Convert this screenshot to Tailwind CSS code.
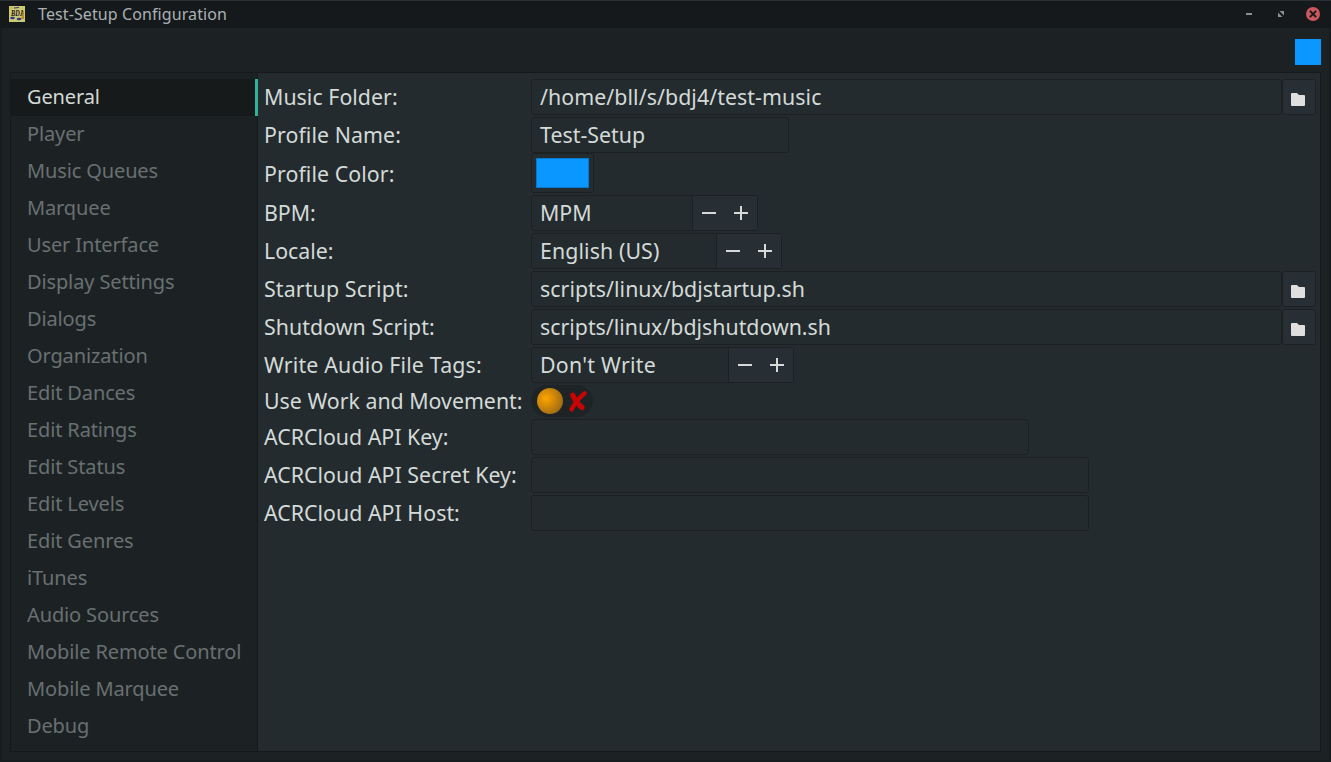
<!DOCTYPE html>
<html lang="en">
<head>
<meta charset="utf-8">
<title>Test-Setup Configuration</title>
<script src="https://cdn.jsdelivr.net/npm/@tailwindcss/browser@4"></script>
</head>
<body class="w-[1331px] h-[762px] overflow-hidden bg-[#1c2224] font-['Noto_Sans',sans-serif]">
<svg class="hidden">
  <symbol id="folder" viewBox="0 0 14 13"><path fill="#dfdfdf" d="M1 0h5l2 2h5q1 0 1 1v9q0 1-1 1H1q-1 0-1-1V1q0-1 1-1z"/></symbol>
  <symbol id="minus" viewBox="0 0 14 14"><path fill="#d3dad8" d="M0 6h14v2H0z"/></symbol>
  <symbol id="plus" viewBox="0 0 14 14"><path fill="#d3dad8" d="M0 6h6V0h2v6h6v2H8v6H6V8H0z"/></symbol>
</svg>
<div class="flex h-full flex-col border-x-2 border-b-2 border-[#171c1e]">
  <header class="-mx-[2px] flex h-7 shrink-0 items-center border-t border-[#2a3033] bg-[#15191b] pb-px pl-[9px] pr-[11px]">
    <svg class="size-4 overflow-visible" viewBox="0 0 16 16">
      <rect width="16" height="16" fill="#c8cb72"/>
      <path d="M1 1h3v2H1z" fill="#d9b84a"/>
      <path d="M5 2l5-.5M14 10v3" stroke="#34368c" stroke-width="1.200" fill="none"/>
      <path d="M13 5h2v8h-3v-2h1z" fill="#c08a2c"/>
      <ellipse cx="3.500" cy="12" rx="2.300" ry="1.200" fill="#34368c"/>
      <ellipse cx="10" cy="13" rx="2.300" ry="1.200" fill="#34368c"/>
      <text x="2" y="10" font-family="Liberation Serif" font-size="8.500" font-weight="bold" font-style="italic" textLength="12" lengthAdjust="spacingAndGlyphs" fill="#2b0d14">BDJ</text>
    </svg>
    <span class="ml-[13px] text-[16px] leading-[26px] tracking-[0.1px] text-[#aab1b4]">Test-Setup Configuration</span>
    <div class="ml-auto flex items-center">
      <svg class="h-[2px] w-[6px]" viewBox="0 0 6 2"><path fill="#8b9092" d="M0 0h6v2H0z"/></svg>
      <svg class="ml-[26px] size-[6px]" viewBox="0 0 6 6"><path fill="#8b9092" d="M1.500 0H6v4.500zM0 1.500L4.500 6H0z"/></svg>
      <svg class="ml-[22px] size-[14px]" viewBox="0 0 14 14"><circle cx="7" cy="7" r="7" fill="#cc575d"/><path d="M4.500 4.500l5 5M9.500 4.500l-5 5" stroke="#15191b" stroke-width="1.800" stroke-linecap="square"/></svg>
    </div>
  </header>
  <div class="flex h-11 shrink-0 justify-end pr-2 pt-[11px]"><div class="size-[26px] bg-[#0a97ff]"></div></div>
  <main class="mx-2 flex h-[680px] shrink-0 border border-[#15191b]">
    <nav class="w-[247px] shrink-0 border-r border-[#15191b] pt-[6px] text-[20px] leading-[35px] tracking-[-0.13px] whitespace-nowrap text-[#697071] *:h-[37px] *:pl-4">
      <div class="-mr-px border-r-3 border-[#2eb398] bg-[#161a1a] text-[#d3dad8]">General</div>
      <div>Player</div>
      <div>Music Queues</div>
      <div>Marquee</div>
      <div>User Interface</div>
      <div>Display Settings</div>
      <div>Dialogs</div>
      <div>Organization</div>
      <div>Edit Dances</div>
      <div>Edit Ratings</div>
      <div>Edit Status</div>
      <div>Edit Levels</div>
      <div>Edit Genres</div>
      <div>iTunes</div>
      <div>Audio Sources</div>
      <div>Mobile Remote Control</div>
      <div>Mobile Marquee</div>
      <div>Debug</div>
    </nav>
    <section class="grid flex-1 grid-cols-[267px_1fr] content-start bg-[#242b2e] pl-[6px] pr-1 pt-[6px] text-[21.333px] leading-[36px] whitespace-nowrap text-[#d3dad8]">
      <div class="h-[38px] tracking-[0.04px]">Music Folder:</div>
      <div class="flex h-9">
        <div class="w-[751px] rounded-[3px] border border-[#1b2123] pl-2 leading-[34px] tracking-[0.07px]">/home/bll/s/bdj4/test-music</div>
        <div class="flex flex-1 items-center justify-center rounded-[3px] border border-[#1b2123] bg-[#272e34]"><svg class="mt-[5px] mr-[2px] h-[13px] w-[14px]"><use href="#folder"/></svg></div>
      </div>
      <div class="h-9 tracking-[0.08px]">Profile Name:</div>
      <div class="h-9 w-[258px] rounded-[3px] border border-[#1b2123] pl-2 leading-[34px] tracking-[0.02px]">Test-Setup</div>
      <div class="h-[42px] leading-[42px] tracking-[0.08px]">Profile Color:</div>
      <div class="h-10 w-[63px] rounded-[3px] border border-[#1b2123] bg-[#252c30] p-1"><div class="h-[30px] w-[53px] border border-[#0779cc] bg-[#0a97ff]"></div></div>
      <div class="h-[38px]">BPM:</div>
      <div class="flex h-9 w-[227px] rounded-[3px] border border-[#1b2123] pl-2 leading-[34px]">MPM
        <div class="ml-auto flex w-[65px] items-center gap-[18px] border-l border-[#1b2123] bg-[#272e34] pl-[9px]"><svg class="size-[14px]"><use href="#minus"/></svg><svg class="size-[14px]"><use href="#plus"/></svg></div>
      </div>
      <div class="h-[38px]">Locale:</div>
      <div class="flex h-9 w-[251px] rounded-[3px] border border-[#1b2123] pl-2 leading-[34px] tracking-[0.1px]">English (US)
        <div class="ml-auto flex w-[65px] items-center gap-[18px] border-l border-[#1b2123] bg-[#272e34] pl-[9px]"><svg class="size-[14px]"><use href="#minus"/></svg><svg class="size-[14px]"><use href="#plus"/></svg></div>
      </div>
      <div class="h-[38px] tracking-[0.14px]">Startup Script:</div>
      <div class="flex h-9">
        <div class="w-[751px] rounded-[3px] border border-[#1b2123] pl-2 leading-[34px] tracking-[0.04px]">scripts/linux/bdjstartup.sh</div>
        <div class="flex flex-1 items-center justify-center rounded-[3px] border border-[#1b2123] bg-[#272e34]"><svg class="mt-[5px] mr-[2px] h-[13px] w-[14px]"><use href="#folder"/></svg></div>
      </div>
      <div class="h-[38px] tracking-[0.07px]">Shutdown Script:</div>
      <div class="flex h-9">
        <div class="w-[751px] rounded-[3px] border border-[#1b2123] pl-2 leading-[34px]">scripts/linux/bdjshutdown.sh</div>
        <div class="flex flex-1 items-center justify-center rounded-[3px] border border-[#1b2123] bg-[#272e34]"><svg class="mt-[5px] mr-[2px] h-[13px] w-[14px]"><use href="#folder"/></svg></div>
      </div>
      <div class="h-[38px] tracking-[0.18px]">Write Audio File Tags:</div>
      <div class="flex h-9 w-[263px] rounded-[3px] border border-[#1b2123] pl-2 leading-[34px] tracking-[0.27px]">Don't Write
        <div class="ml-auto flex w-[65px] items-center gap-[18px] border-l border-[#1b2123] bg-[#272e34] pl-[9px]"><svg class="size-[14px]"><use href="#minus"/></svg><svg class="size-[14px]"><use href="#plus"/></svg></div>
      </div>
      <div class="h-[34px] leading-[32px]">Use Work and Movement:</div>
      <div class="flex h-8 w-[62px] items-center rounded-full bg-[#1e2426] pl-[5.500px]">
        <div class="size-[26.500px] rounded-full bg-[radial-gradient(circle_at_35%_40%,#ffa500_0%,#80581a_100%)]"></div>
        <svg class="mt-px ml-[6px] h-[21px] w-[18px]" viewBox="0 0 18 21"><path fill="none" stroke="#c80404" stroke-linecap="round" stroke-width="5.200" d="M3.800 4.200q3 7 9.200 12.300"/><path fill="none" stroke="#c80404" stroke-linecap="round" stroke-width="4.400" d="M15.500 2.400Q8 8.500 2.500 18.300"/></svg>
      </div>
      <div class="h-[38px]">ACRCloud API Key:</div>
      <div class="h-9 w-[498px] rounded-[3px] border border-[#1b2123]"></div>
      <div class="h-[38px] tracking-[0.03px]">ACRCloud API Secret Key:</div>
      <div class="h-9 w-[558px] rounded-[3px] border border-[#1b2123]"></div>
      <div class="h-[38px] tracking-[0.03px]">ACRCloud API Host:</div>
      <div class="h-9 w-[558px] rounded-[3px] border border-[#1b2123]"></div>
    </section>
  </main>
</div>
</body>
</html>
